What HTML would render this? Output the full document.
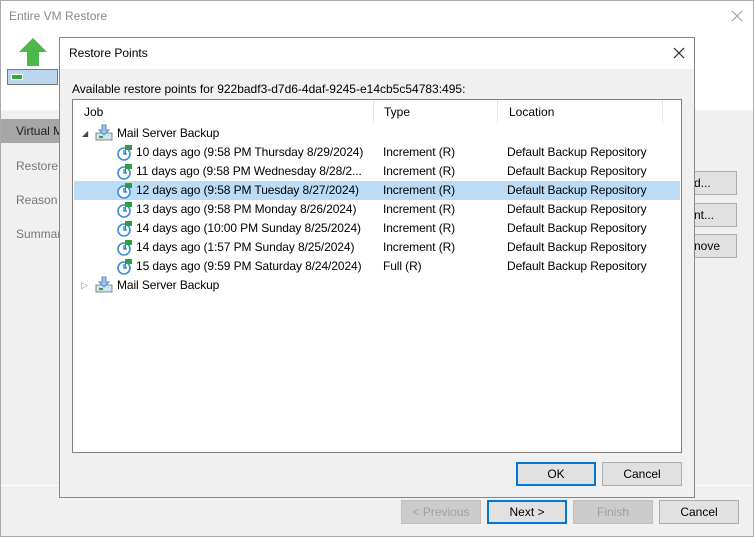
<!DOCTYPE html>
<html><head><style>
*{margin:0;padding:0;box-sizing:border-box}
body{width:754px;height:537px;position:relative;overflow:hidden;font-family:"Liberation Sans",sans-serif;font-size:12px;color:#000;background:#f0f0f0}
.abs{position:absolute}
.btn{position:absolute;height:24px;border:1px solid #adadad;background:#e1e1e1;text-align:center;line-height:22px;font-size:12px}
.row{position:absolute;left:1px;right:1px;height:19px;line-height:19px;white-space:nowrap;letter-spacing:-0.1px}
.row span{position:absolute}
.clk{position:absolute;left:42px;top:1px}
</style></head><body>
<div class="abs" style="left:0;top:0;width:754px;height:537px;border:1px solid #aaa;background:#f0f0f0"></div>
<div class="abs" style="left:1px;top:1px;width:752px;height:109px;background:#fff"></div>
<div class="abs" style="left:9px;top:9px;color:#888;font-size:12px">Entire VM Restore</div>
<svg class="abs" style="left:731px;top:10px" width="12" height="12"><path d="M1 1L11 11M11 1L1 11" stroke="#999" stroke-width="1"/></svg>
<svg class="abs" style="left:18px;top:37px" width="30" height="30"><polygon points="15,1 29,15 21,15 21,29 9,29 9,15 1,15" fill="#4db84a"/></svg>
<div class="abs" style="left:7px;top:69px;width:51px;height:16px;border:1px solid #777;background:#bdd6ef"></div>
<div class="abs" style="left:12px;top:75px;width:10px;height:4px;background:#3aa63a;outline:1px solid #fff"></div>
<div class="abs" style="left:1px;top:119px;width:60px;height:24px;background:#a6a6a6"></div>
<div class="abs" style="left:16px;top:124px;color:#222">Virtual M</div>
<div class="abs" style="left:16px;top:159px;color:#777">Restore</div>
<div class="abs" style="left:16px;top:193px;color:#777">Reason</div>
<div class="abs" style="left:16px;top:227px;color:#777">Summar</div>
<div class="abs" style="left:1px;top:485px;width:752px;height:1px;background:#fff"></div>
<div class="btn" style="left:693px;top:171px;width:44px;text-align:left">d...</div>
<div class="btn" style="left:693px;top:203px;width:44px;text-align:left">nt...</div>
<div class="btn" style="left:693px;top:234px;width:44px;text-align:left">nove</div>
<div class="btn" style="left:401px;top:500px;width:80px;color:#a0a0a0;background:#ccc;border-color:#bfbfbf">&lt; Previous</div>
<div class="btn" style="left:487px;top:500px;width:80px;border:2px solid #0078d7;line-height:20px">Next &gt;</div>
<div class="btn" style="left:573px;top:500px;width:80px;color:#a0a0a0;background:#ccc;border-color:#bfbfbf">Finish</div>
<div class="btn" style="left:659px;top:500px;width:80px">Cancel</div>

<div class="abs" style="left:59px;top:37px;width:636px;height:461px;border:1px solid #888;background:#f0f0f0">
 <div class="abs" style="left:0;top:0;width:634px;height:31px;background:#fff"></div>
 <div class="abs" style="left:9px;top:8px">Restore Points</div>
 <svg class="abs" style="left:613px;top:9px" width="12" height="12"><path d="M1 1L11 11M11 1L1 11" stroke="#222" stroke-width="1.2"/></svg>
 <div class="abs" style="left:12px;top:44px">Available restore points for 922badf3-d7d6-4daf-9245-e14cb5c54783:495:</div>
 <div class="abs" style="left:12px;top:61px;width:610px;height:354px;border:1px solid #828282;background:#fff;overflow:hidden">
  <div class="abs" style="left:11px;top:5px">Job</div>
  <div class="abs" style="left:300px;top:0;width:1px;height:23px;background:#e5e5e5"></div>
  <div class="abs" style="left:311px;top:5px">Type</div>
  <div class="abs" style="left:424px;top:0;width:1px;height:23px;background:#e5e5e5"></div>
  <div class="abs" style="left:436px;top:5px">Location</div>
  <div class="abs" style="left:589px;top:0;width:1px;height:23px;background:#e5e5e5"></div>
  <div id="rows"></div>
 </div>
 <div class="btn" style="left:456px;top:424px;width:80px;border:2px solid #0078d7;line-height:20px">OK</div>
 <div class="btn" style="left:542px;top:424px;width:80px">Cancel</div>
</div>
<script>
var jobIcon='<svg width="18" height="18"><rect x="1" y="9" width="16" height="7" fill="#cfe2f3" stroke="#888"/><rect x="4" y="12" width="4" height="2" fill="#3aa63a"/><path d="M7 1h4v5h3l-5 5-5-5h3z" fill="#9cc3e6" stroke="#5a8fc4"/></svg>';
var clk='<svg width="18" height="18"><circle cx="8" cy="10" r="6" fill="#fff" stroke="#3a8fd6" stroke-width="1.6"/><path d="M8 6v4h3" stroke="#3a8fd6" stroke-width="1.5" fill="none"/><rect x="10" y="1" width="6" height="5" fill="#2e9e3e"/><rect x="9" y="1" width="1" height="9" fill="#2e9e3e"/></svg>';
var R=document.getElementById('rows'),h='';
var y=24;
h+='<div class="row" style="top:'+y+'px"><span style="left:8px;top:0;font-size:8px;color:#444">◢</span><span style="left:21px;top:0">'+jobIcon+'</span><span style="left:43px">Mail Server Backup</span></div>';
var d=[["10 days ago (9:58 PM Thursday 8/29/2024)","Increment (R)"],["11 days ago (9:58 PM Wednesday 8/28/2...","Increment (R)"],["12 days ago (9:58 PM Tuesday 8/27/2024)","Increment (R)"],["13 days ago (9:58 PM Monday 8/26/2024)","Increment (R)"],["14 days ago (10:00 PM Sunday 8/25/2024)","Increment (R)"],["14 days ago (1:57 PM Sunday 8/25/2024)","Increment (R)"],["15 days ago (9:59 PM Saturday 8/24/2024)","Full (R)"]];
d.forEach(function(r,i){y+=19;h+='<div class="row" style="top:'+y+'px;'+(i==2?'background:#bcdcf6;':'')+'"><span class="clk">'+clk+'</span><span style="left:62px">'+r[0]+'</span><span style="left:309px">'+r[1]+'</span><span style="left:433px">Default Backup Repository</span></div>';});
y+=19;
h+='<div class="row" style="top:'+y+'px"><span style="left:7px;color:#999;font-size:9px">▷</span><span style="left:21px;top:0">'+jobIcon+'</span><span style="left:43px">Mail Server Backup</span></div>';
R.innerHTML=h;
</script>
</body></html>
